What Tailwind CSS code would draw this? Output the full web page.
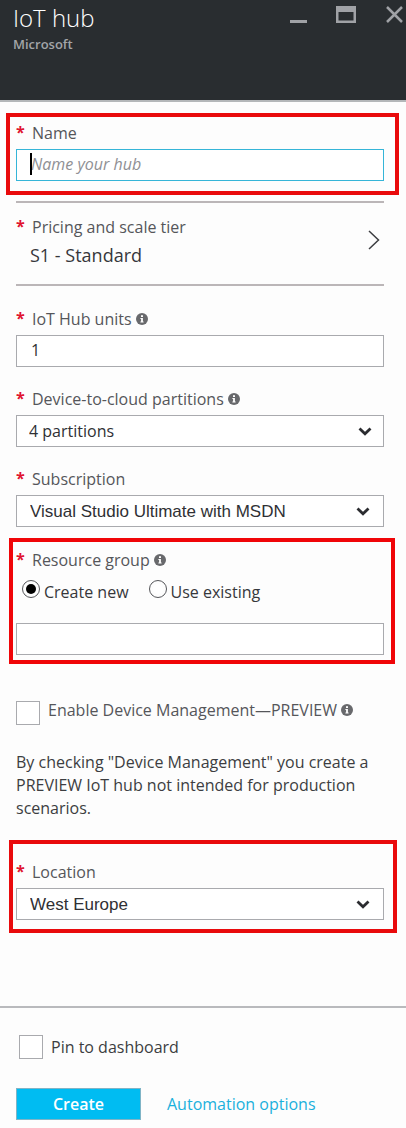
<!DOCTYPE html>
<html lang="en">
<head>
<meta charset="utf-8">
<meta name="viewport" content="width=device-width, initial-scale=1">
<title>IoT hub</title>
<script src="https://cdn.jsdelivr.net/npm/@tailwindcss/browser@4"></script>
</head>
<body class="bg-[#fdfdfd] font-['Open_Sans','Noto_Sans',sans-serif] text-[16px] text-[#55565a]">
<svg class="hidden" aria-hidden="true">
  <symbol id="info" viewBox="0 0 12 12"><circle cx="6" cy="6" r="6" fill="#68696c"/><path d="M5 2.2h2v1.7H5zM4.4 5h2.5v3.6h.7v1H4.4v-1h.7V6h-.7z" fill="#fff"/></symbol>
  <symbol id="chevron" viewBox="0 0 14 9"><path d="M1.5 1.5L7 6.8l5.500-5.300" fill="none" stroke="#2b2c30" stroke-width="2.800"/></symbol>
</svg>

<header class="flex h-[102px] items-start justify-between border-b-2 border-[#b4b7b9] bg-[#292d30] pl-[13px]">
  <div>
    <h1 class="pt-0.5 text-[24px] leading-8 font-light text-white">IoT hub</h1>
    <p class="text-[13px] leading-5 font-semibold text-[#a2a5a8]">Microsoft</p>
  </div>
  <div class="flex gap-7 pt-1 pr-0.5 text-[#a0a2a6]">
    <button type="button" aria-label="Minimize"><svg class="h-5 w-5" viewBox="0 0 20 20"><path d="M2 16h17v3H2z" fill="currentColor"/></svg></button>
    <button type="button" aria-label="Maximize"><svg class="h-5 w-5" viewBox="0 0 20 20"><path fill-rule="evenodd" d="M0 2h20v17H0zM2.500 8v8.500h15V8z" fill="currentColor"/></svg></button>
    <button type="button" aria-label="Close"><svg class="h-5 w-5" viewBox="0 0 20 20"><path d="M3 3l15 15M18 3L3 18" fill="none" stroke="currentColor" stroke-width="2.500"/></svg></button>
  </div>
</header>

<form>
  <main class="pt-[11px]">
    <section class="mr-[7px] ml-1.5 border-4 border-[#e90a0c] pt-1 pr-[11px] pb-2.5 pl-1.5">
      <label for="name" class="mb-1 flex h-6 items-center gap-2"><span class="w-2 self-start font-bold leading-[22px] text-[#e0142f]">*</span>Name</label>
      <div class="relative">
        <input id="name" type="text" placeholder="Name your hub" class="block h-8 w-full border border-[#35b5d8] bg-white px-[14px] pb-0.5 text-[#2f3034] outline-none placeholder:text-[#8f9094] placeholder:italic">
        <span class="absolute top-1 left-[14px] h-[22px] w-0.5 bg-black"></span>
      </div>
    </section>

    <section class="mt-1.5 mr-[22px] ml-4 border-y-2 border-[#bbb6b8]">
      <button type="button" class="flex w-full items-center justify-between pt-3 pb-[13px] text-left">
        <span>
          <span class="flex h-6 items-center gap-2"><span class="w-2 self-start font-bold leading-[22px] text-[#e0142f]">*</span>Pricing and scale tier</span>
          <span class="flex h-8 items-center pl-[14px] text-[18px] text-[#36373b]">S1 - Standard</span>
        </span>
        <svg class="mr-1 mb-1.5 h-5 w-3" viewBox="0 0 12 20"><path d="M1 1l9.500 9L1 19" fill="none" stroke="#3c3d41" stroke-width="1.500"/></svg>
      </button>
    </section>

    <div class="mt-[21px] mr-[22px] ml-4 flex flex-col gap-5">
      <div>
        <label for="units" class="mb-1 flex h-6 items-center gap-2"><span class="w-2 self-start font-bold leading-[22px] text-[#e0142f]">*</span><span class="flex items-center gap-1">IoT Hub units<svg class="h-3 w-3"><use href="#info"/></svg></span></label>
        <input id="units" type="text" value="1" class="block h-8 w-full border border-[#a9aaae] bg-white px-[14px] pb-0.5 text-[#2f3034]">
      </div>
      <div>
        <label for="partitions" class="mb-1 flex h-6 items-center gap-2"><span class="w-2 self-start font-bold leading-[22px] text-[#e0142f]">*</span><span class="flex items-center gap-1">Device-to-cloud partitions<svg class="h-3 w-3"><use href="#info"/></svg></span></label>
        <div class="relative">
          <select id="partitions" class="block h-8 w-full appearance-none border border-[#a9aaae] bg-white px-3 text-[#2f3034]"><option>4 partitions</option></select>
          <svg class="pointer-events-none absolute top-3 right-3 h-[9px] w-[14px]"><use href="#chevron"/></svg>
        </div>
      </div>
      <div>
        <label for="subscription" class="mb-1 flex h-6 items-center gap-2"><span class="w-2 self-start font-bold leading-[22px] text-[#e0142f]">*</span>Subscription</label>
        <div class="relative">
          <select id="subscription" class="block h-8 w-full appearance-none border border-[#a9aaae] bg-white px-[13px] pt-0.5 font-['Liberation_Sans',sans-serif] text-[17px] text-[#2f3034]"><option>Visual Studio Ultimate with MSDN</option></select>
          <svg class="pointer-events-none absolute top-3 right-[14px] h-[9px] w-[14px]"><use href="#chevron"/></svg>
        </div>
      </div>
    </div>

    <fieldset class="mt-[11px] mr-[11px] ml-[9px] border-4 border-[#f00508] pt-1.5 pr-[7px] pb-[5px] pl-[3px]">
      <div class="flex h-6 items-center gap-2"><span class="w-2 self-start font-bold leading-[22px] text-[#e0142f]">*</span><label for="group" class="flex items-center gap-1">Resource group<svg class="h-3 w-3"><use href="#info"/></svg></label></div>
      <div class="mt-1.5 flex h-6 items-start gap-5 pl-1.5 text-[#36373b]">
        <label class="flex gap-1"><input type="radio" name="mode" checked class="mt-0.5 h-[18px] w-[18px] appearance-none rounded-full border border-[#55565a] bg-white bg-clip-content p-[3px] checked:bg-black"><span class="leading-7">Create new</span></label>
        <label class="flex gap-1"><input type="radio" name="mode" class="mt-0.5 h-[18px] w-[18px] appearance-none rounded-full border border-[#55565a] bg-white bg-clip-content p-[3px] checked:bg-black"><span class="leading-7">Use existing</span></label>
      </div>
      <input id="group" type="text" class="mt-[21px] block h-8 w-full border border-[#a9aaae] bg-white px-[14px] text-[#2f3034]">
    </fieldset>

    <div class="mx-4 mt-[37px] flex items-start gap-2">
      <input id="devmgmt" type="checkbox" class="h-6 w-6 shrink-0 appearance-none border border-[#a9aaae] bg-white checked:bg-[#00bcf2]">
      <label for="devmgmt" class="flex items-center gap-1 leading-[18px]">Enable Device Management—PREVIEW<svg class="h-3 w-3"><use href="#info"/></svg></label>
    </div>
    <p class="mx-4 mt-[26px] leading-[23px] text-[#3c3d41]">By checking "Device Management" you create a PREVIEW IoT hub not intended for production scenarios.</p>

    <section class="mt-5 mr-[9px] ml-[9px] border-4 border-[#e90a0c] pt-4 pr-[9px] pb-[9px] pl-[3px]">
      <label for="location" class="mb-1 flex h-6 items-center gap-2"><span class="w-2 self-start font-bold leading-[22px] text-[#e0142f]">*</span>Location</label>
      <div class="relative">
        <select id="location" class="block h-8 w-full appearance-none border border-[#a9aaae] bg-white px-[13px] pt-0.5 font-['Liberation_Sans',sans-serif] text-[17px] text-[#2f3034]"><option>West Europe</option></select>
        <svg class="pointer-events-none absolute top-3 right-[14px] h-[9px] w-[14px]"><use href="#chevron"/></svg>
      </div>
    </section>
  </main>

  <footer class="mt-[73px] border-t-2 border-[#b9babd] px-4 pt-[27px] pb-2">
    <label class="flex items-center gap-2 pl-[3px] text-[#3c3d41]"><input type="checkbox" class="h-6 w-6 appearance-none border border-[#a9aaae] bg-white checked:bg-[#00bcf2]">Pin to dashboard</label>
    <div class="mt-[29px] flex items-center gap-[26px]">
      <button type="button" class="h-8 w-[125px] border border-[#7fb4c6] bg-[#00bcf2] font-semibold text-white">Create</button>
      <a href="#" class="text-[#1ab0dc]">Automation options</a>
    </div>
  </footer>
</form>
</body>
</html>
